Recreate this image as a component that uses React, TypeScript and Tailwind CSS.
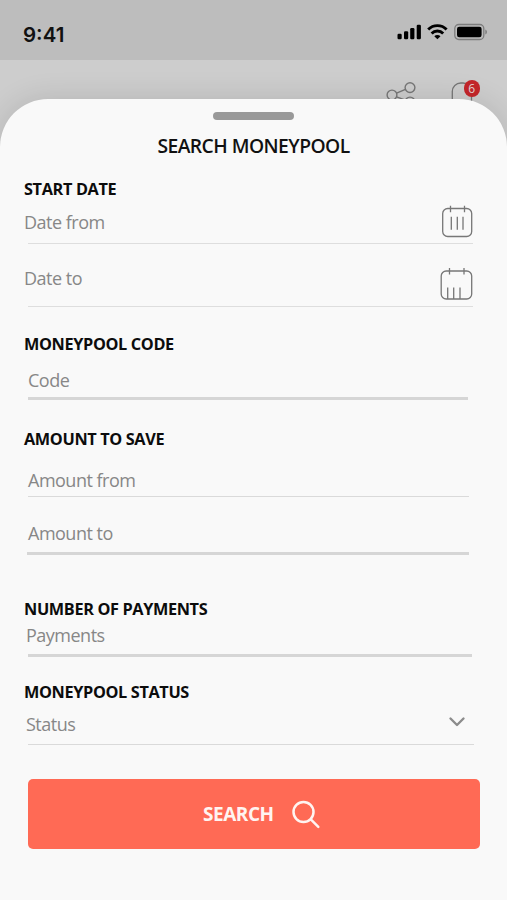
import type { ReactNode } from 'react';

function StatusBar() {
  return (
    <div className="h-[60px] bg-[#bdbdbd] flex items-start justify-between pl-[23px] pr-[19px]">
      <span className="mt-[23px] font-['Inter'] font-semibold text-[20.5px] leading-6 text-[#111]">9:41</span>
      <div className="mt-[22px] flex items-center">
        <svg width="26" height="20" viewBox="0 0 26 20" fill="#000">
          <rect x="0.5" y="11.7" width="4.2" height="5.6" rx="1.2" />
          <rect x="7" y="9.2" width="4.2" height="8.1" rx="1.2" />
          <rect x="13.2" y="6" width="4.2" height="11.3" rx="1.2" />
          <rect x="19.7" y="2.8" width="4.2" height="14.5" rx="1.2" />
        </svg>
        <svg className="ml-1" width="21" height="20" viewBox="0 0 21 20" fill="none" stroke="#000" strokeWidth="2.9">
          <path d="M1.2 7.4a13 13 0 0 1 18.4 0" />
          <path d="M4.6 11.4a8.2 8.2 0 0 1 11.6 0" />
          <path d="M10.4 17.3 7.3 14.2a4.4 4.4 0 0 1 6.2 0Z" fill="#000" stroke="none" />
        </svg>
        <svg className="ml-[6px]" width="34" height="20" viewBox="0 0 34 20" fill="none">
          <rect x="0.8" y="2.5" width="29" height="15" rx="4" stroke="#7d7d7d" strokeWidth="1.3" />
          <rect x="3" y="4.7" width="24.6" height="10.6" rx="2.2" fill="#000" />
          <path d="M31.3 7.5v5c2.2-.9 2.2-4.1 0-5Z" fill="#7d7d7d" />
        </svg>
      </div>
    </div>
  );
}

function Header() {
  return (
    <div className="h-[60px] flex justify-end pr-[26px] pt-[19px]">
      <svg className="mr-[30px]" width="32" height="34" viewBox="0 0 32 34" fill="none" stroke="#777" strokeWidth="1.4">
        <circle cx="24" cy="8.6" r="4.9" />
        <circle cx="6" cy="16" r="4.9" />
        <circle cx="24" cy="23" r="4.9" />
        <path d="M10.6 14.2 19.4 10.4M10.6 17.8 19.4 21.2" />
      </svg>
      <div className="relative w-[33px]">
        <svg width="33" height="34" viewBox="0 0 33 34" fill="none" stroke="#777" strokeWidth="1.3">
          <path d="M4.3 30V12.5a8.5 8.5 0 0 1 8.5-8.5H15a8.5 8.5 0 0 1 8.5 8.5V30" />
        </svg>
        <span className="absolute left-[15.5px] top-[1px] size-[16.5px] rounded-full bg-[#c4262a] text-[#e3d4d4] text-[12px] leading-[17px] text-center">6</span>
      </div>
    </div>
  );
}

function CalendarIcon({ low = false }: { low?: boolean }) {
  return low ? (
    <svg className="relative top-px" width="34" height="36" viewBox="0 0 34 36" fill="none" stroke="#777" strokeWidth="1.3">
      <rect x="1.2" y="4" width="30.5" height="28" rx="5" />
      <path d="M9.5 1v6.5M24 1v6.5M7.7 20.5v11.5M13.7 20.5v11.5M20 20.5v11.5" />
    </svg>
  ) : (
    <svg width="34" height="36" viewBox="0 0 34 36" fill="none" stroke="#777" strokeWidth="1.3">
      <rect x="2.7" y="4.5" width="29" height="28" rx="5" />
      <path d="M10.5 1.7v6.5M24.5 1.7v6.5M11.3 12.8v13M17.3 12.8v13M23 12.8v13" />
    </svg>
  );
}

function SectionTitle({ className, children }: { className: string; children: string }) {
  return <h2 className={`ml-6 h-6 font-bold text-[16.3px] leading-6 tracking-[-0.36px] text-[#0c0c0c] whitespace-nowrap ${className}`}>{children}</h2>;
}

type FieldProps = { label: string; row: string; line: string; text?: string; icon?: ReactNode };

function Field({ label, row, line, text = '', icon }: FieldProps) {
  return (
    <div className={`flex flex-col justify-between ${row}`}>
      <div className="flex justify-between pr-[33px]">
        <span className={`text-[18px] leading-6 tracking-[-0.5px] text-[#878787] whitespace-nowrap ${text}`}>{label}</span>
        {icon}
      </div>
      <div className={line} />
    </div>
  );
}

export default function App() {
  return (
    <div className="w-full h-[900px] overflow-hidden bg-[#cdcdcd] font-['Open_Sans','Noto_Sans',sans-serif]">
      <StatusBar />
      <Header />
      <main className="relative -mt-[21px] h-[801px] rounded-t-[48px] bg-[#f9f9f9] shadow-[0_0_30px_rgba(0,0,0,0.12)] flex flex-col">
        <div className="mt-[12.5px] ml-[213px] w-[81px] h-[8px] shrink-0 rounded-full bg-[#999]" />
        <h1 className="mt-[13.5px] h-[26px] text-center text-[19.3px] leading-[26px] tracking-[-0.55px] font-semibold text-[#111]">SEARCH MONEYPOOL</h1>

        <SectionTitle className="mt-[18px]">START DATE</SectionTitle>
        <Field
          label="Date from"
          row="mt-[3px] h-[40px]"
          text="ml-6 mt-[6px]"
          line="ml-7 w-[445px] h-[1.5px] bg-[#dedede]"
          icon={<CalendarIcon />}
        />
        <Field
          label="Date to"
          row="mt-[22px] h-[41px]"
          text="ml-6"
          line="ml-7 w-[445px] h-[1.5px] bg-[#dedede]"
          icon={<CalendarIcon low />}
        />

        <SectionTitle className="mt-[25px]">MONEYPOOL CODE</SectionTitle>
        <Field label="Code" row="mt-[12px] h-[32px]" text="ml-7" line="ml-7 w-[440px] h-[3px] bg-[#d6d6d6]" />

        <SectionTitle className="mt-[27px]">AMOUNT TO SAVE</SectionTitle>
        <Field label="Amount from" row="mt-[17px] h-[29px]" text="ml-7" line="ml-7 w-[441px] h-[1.5px] bg-[#dadada]" />
        <Field label="Amount to" row="mt-[24px] h-[34px]" text="ml-7" line="ml-[27px] w-[442px] h-[3px] bg-[#d6d6d6]" />

        <SectionTitle className="mt-[42px]">NUMBER OF PAYMENTS</SectionTitle>
        <Field label="Payments" row="mt-[2px] h-[34px]" text="ml-[26px]" line="ml-7 w-[444px] h-[3px] bg-[#d6d6d6]" />

        <SectionTitle className="mt-[23px]">MONEYPOOL STATUS</SectionTitle>
        <Field
          label="Status"
          row="mt-[8px] h-[33px]"
          text="ml-[26px]"
          line="ml-7 w-[446px] h-[1.5px] bg-[#dadada]"
          icon={
            <svg className="mr-[7px]" width="20" height="20" viewBox="0 0 20 20" fill="none" stroke="#8c8c8c" strokeWidth="2.4" strokeLinecap="round" strokeLinejoin="round">
              <path d="m3.5 6.5 6.5 6.5L16.500 6.5" />
            </svg>
          }
        />

        <button className="mt-[34px] ml-7 w-[452px] h-[70px] shrink-0 rounded-[5px] bg-[#ff6a55] flex items-center pl-[175px] text-[#fff4f1]">
          <span className="font-bold text-[19px] leading-6 tracking-[-0.45px]">SEARCH</span>
          <svg className="ml-[17px] mt-[2px]" width="30" height="30" viewBox="0 0 30 30" fill="none" stroke="currentColor" strokeWidth="2.5" strokeLinecap="round">
            <circle cx="12.5" cy="12" r="10" />
            <path d="m19.8 19.3 7.5 7.5" />
          </svg>
        </button>
      </main>
    </div>
  );
}
